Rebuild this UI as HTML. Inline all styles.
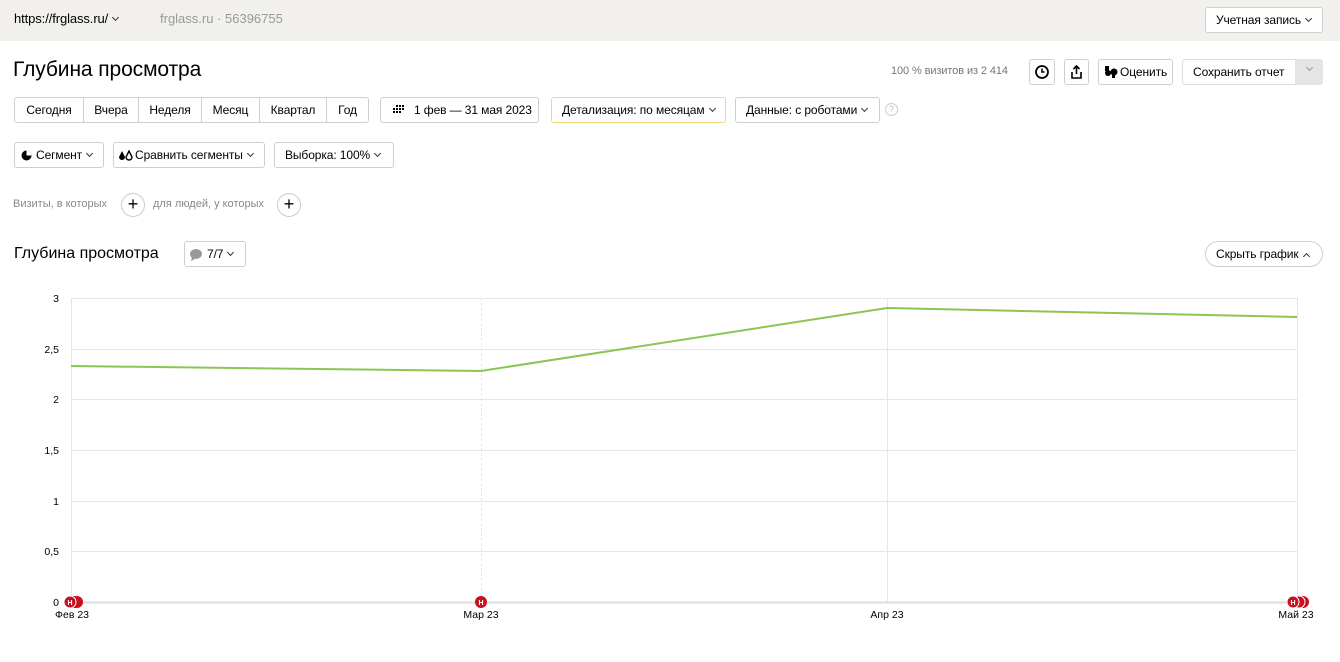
<!DOCTYPE html>
<html><head><meta charset="utf-8"><style>
*{box-sizing:border-box;margin:0;padding:0}
body{width:1340px;height:662px;background:#fff;font-family:"Liberation Sans",Arial,sans-serif;font-size:13px;color:#000;position:relative;overflow:hidden}
.top{position:absolute;left:0;top:0;width:1340px;height:41px;background:#f1f0ed}
.a{position:absolute;white-space:nowrap}
.btn{position:absolute;height:26px;border:1px solid #cfcfcf;border-radius:3px;background:#fff;font-size:12px;line-height:24px;white-space:nowrap;padding:0 10px;letter-spacing:-0.1px}
.chev{display:inline-block;width:5px;height:5px;border-right:1.1px solid #333;border-bottom:1.1px solid #333;transform:rotate(45deg);margin-left:5px;position:relative;top:-3px}
.seg{position:absolute;top:97px;left:14px;height:26px;display:flex;border:1px solid #cfcfcf;border-radius:3px;font-size:12px;line-height:24px;letter-spacing:-0.1px}
.seg span{text-align:center;border-left:1px solid #cfcfcf}
.seg span:first-child{border-left:none}
.plus{position:absolute;width:24px;height:24px;border:1px solid #ccc;border-radius:50%;text-align:center;line-height:21px;font-size:18px}
</style></head><body>
<div class="top"></div>
<div class="a" style="left:14px;top:11px;font-size:13px;letter-spacing:-0.1px">https://frglass.ru/<span class="chev"></span></div>
<div class="a" style="left:160px;top:11px;font-size:13px;color:#999">frglass.ru · 56396755</div>
<div class="btn" style="left:1205px;top:7px;width:118px;padding:0 10px">Учетная запись<span class="chev"></span></div>

<div class="a" style="left:13px;top:58px;font-size:21px;letter-spacing:-0.1px">Глубина просмотра</div>
<div class="a" style="left:891px;top:65px;font-size:11px;color:#777;letter-spacing:-0.1px">100 % визитов из 2 414</div>
<div class="btn" style="left:1029px;top:59px;width:26px;padding:0">
<svg width="24" height="24" viewBox="0 0 24 24"><circle cx="12" cy="12" r="6" fill="none" stroke="#000" stroke-width="1.8"/><path d="M12 8.5V12h2.5" fill="none" stroke="#000" stroke-width="1.5"/></svg></div>
<div class="btn" style="left:1064px;top:59px;width:25px;padding:0">
<svg width="23" height="24" viewBox="0 0 23 24"><path d="M11.5 6v8M8.5 9l3-3 3 3M7 12v6h9v-6" fill="none" stroke="#000" stroke-width="1.6"/></svg></div>
<div class="btn" style="left:1098px;top:59px;width:75px;padding:0 0 0 21px">Оценить
<svg style="position:absolute;left:5px;top:6px" width="14" height="12"><rect x="1" y="0" width="4" height="5" fill="#000"/><circle cx="4" cy="7" r="3" fill="#000"/><circle cx="10" cy="6" r="3.5" fill="#000"/><rect x="8" y="8" width="3" height="4" fill="#000"/></svg></div>
<div class="btn" style="left:1182px;top:59px;width:141px;padding:0 0 0 10px;border-color:#ddd">Сохранить отчет</div>
<div class="a" style="left:1295px;top:59px;width:28px;height:26px;background:#e5e5e5;border-radius:0 3px 3px 0;text-align:center;line-height:20px"><span class="chev" style="border-color:#999;margin:0"></span></div>

<div class="seg"><span style="width:68px">Сегодня</span><span style="width:55px">Вчера</span><span style="width:63px">Неделя</span><span style="width:58px">Месяц</span><span style="width:67px">Квартал</span><span style="width:42px">Год</span></div>
<div class="btn" style="left:380px;top:97px;width:159px;padding-left:33px">1 фев — 31 мая 2023
<svg style="position:absolute;left:11px;top:7px" width="12" height="10"><g fill="#000"><rect x="4" y="0" width="2" height="2"/><rect x="7" y="0" width="2" height="2"/><rect x="10" y="0" width="2" height="2"/><rect x="1" y="3" width="2" height="2"/><rect x="4" y="3" width="2" height="2"/><rect x="7" y="3" width="2" height="2"/><rect x="10" y="3" width="2" height="2"/><rect x="1" y="6" width="2" height="2"/><rect x="4" y="6" width="2" height="2"/><rect x="7" y="6" width="2" height="2"/></g></svg></div>
<div class="btn" style="left:551px;top:97px;width:175px;border-color:#f3d77a">Детализация: по месяцам<span class="chev"></span></div>
<div class="btn" style="left:735px;top:97px;width:145px">Данные: с роботами<span class="chev"></span></div>
<div class="a" style="left:885px;top:103px;width:13px;height:13px;border:1px solid #ccc;border-radius:50%;font-size:9px;color:#bbb;text-align:center;line-height:11px">?</div>

<div class="btn" style="left:14px;top:142px;width:90px;padding-left:21px">Сегмент<span class="chev"></span>
<svg style="position:absolute;left:6px;top:7px" width="11" height="11"><circle cx="5.5" cy="5.5" r="5" fill="#000"/><path d="M5.5 5.5V0.5A5 5 0 0 1 10.5 5.5Z" fill="#fff"/></svg></div>
<div class="btn" style="left:113px;top:142px;width:152px;padding-left:21px">Сравнить сегменты<span class="chev"></span>
<svg style="position:absolute;left:4px;top:7px" width="16" height="11"><path d="M4 1L1 7a3 3 0 0 0 6 0Z" fill="#000"/><path d="M11 1L8 7a3 3 0 0 0 6 0Z" fill="none" stroke="#000" stroke-width="1.4"/></svg></div>
<div class="btn" style="left:274px;top:142px;width:120px">Выборка: 100%<span class="chev"></span></div>

<div class="a" style="left:13px;top:198px;font-size:11px;color:#888">Визиты, в которых</div>
<div class="plus" style="left:121px;top:193px">+</div>
<div class="a" style="left:153px;top:198px;font-size:11px;color:#888">для людей, у которых</div>
<div class="plus" style="left:277px;top:193px">+</div>

<div class="a" style="left:14px;top:245px;font-size:16px">Глубина просмотра</div>
<div class="btn" style="left:184px;top:241px;width:62px;padding-left:22px;font-size:12px">7/7<span class="chev"></span>
<svg style="position:absolute;left:4px;top:6px" width="14" height="13"><ellipse cx="7" cy="6" rx="6" ry="5" fill="#999"/><path d="M3 9l-1 4 4-2z" fill="#999"/></svg></div>
<div class="btn" style="left:1205px;top:241px;width:118px;border-radius:13px;font-size:12px">Скрыть график<span class="chev" style="transform:rotate(225deg);top:1px"></span></div>

<svg class="a" style="left:0;top:280px" width="1340" height="350">
<g stroke="#e6e6e6" stroke-width="1">
<line x1="71" y1="18.5" x2="1297" y2="18.5"/><line x1="71" y1="69.5" x2="1297" y2="69.5"/><line x1="71" y1="119.5" x2="1297" y2="119.5"/><line x1="71" y1="170.5" x2="1297" y2="170.5"/><line x1="71" y1="221.5" x2="1297" y2="221.5"/><line x1="71" y1="271.5" x2="1297" y2="271.5"/>
<line x1="71.5" y1="18" x2="71.5" y2="322"/><line x1="1297.5" y1="18" x2="1297.5" y2="322"/>
<line x1="481.5" y1="18" x2="481.5" y2="322" stroke-dasharray="3,2"/><line x1="887.5" y1="18" x2="887.5" y2="322"/>
<line x1="71" y1="322.5" x2="1297" y2="322.5" stroke="#ddd" stroke-width="2"/>
</g>
<polyline points="71,86 481,91 887,28 1297,37" fill="none" stroke="#8bc653" stroke-width="2"/>
<g font-size="10.5" fill="#000" text-anchor="end"><text x="59" y="22">3</text><text x="59" y="73">2,5</text><text x="59" y="123">2</text><text x="59" y="174">1,5</text><text x="59" y="225">1</text><text x="59" y="275">0,5</text><text x="59" y="326">0</text></g>
<g font-size="10.5" fill="#000" text-anchor="middle"><text x="72" y="338">Фев 23</text><text x="481" y="338">Мар 23</text><text x="887" y="338">Апр 23</text><text x="1296" y="338">Май 23</text></g>
<g fill="#c8101f"><circle cx="77" cy="322" r="6"/><circle cx="74" cy="322" r="6"/><circle cx="70" cy="322" r="6" stroke="#fff" stroke-width="1"/><circle cx="481" cy="322" r="6"/><circle cx="1303" cy="322" r="6"/><circle cx="1299" cy="322" r="6" stroke="#fff"/><circle cx="1293" cy="322" r="6" stroke="#fff"/></g>
<g font-size="7" fill="#fff" text-anchor="middle" font-weight="bold"><text x="70" y="325">H</text><text x="481" y="325">H</text><text x="1293" y="325">H</text></g>
</svg>
</body></html>
